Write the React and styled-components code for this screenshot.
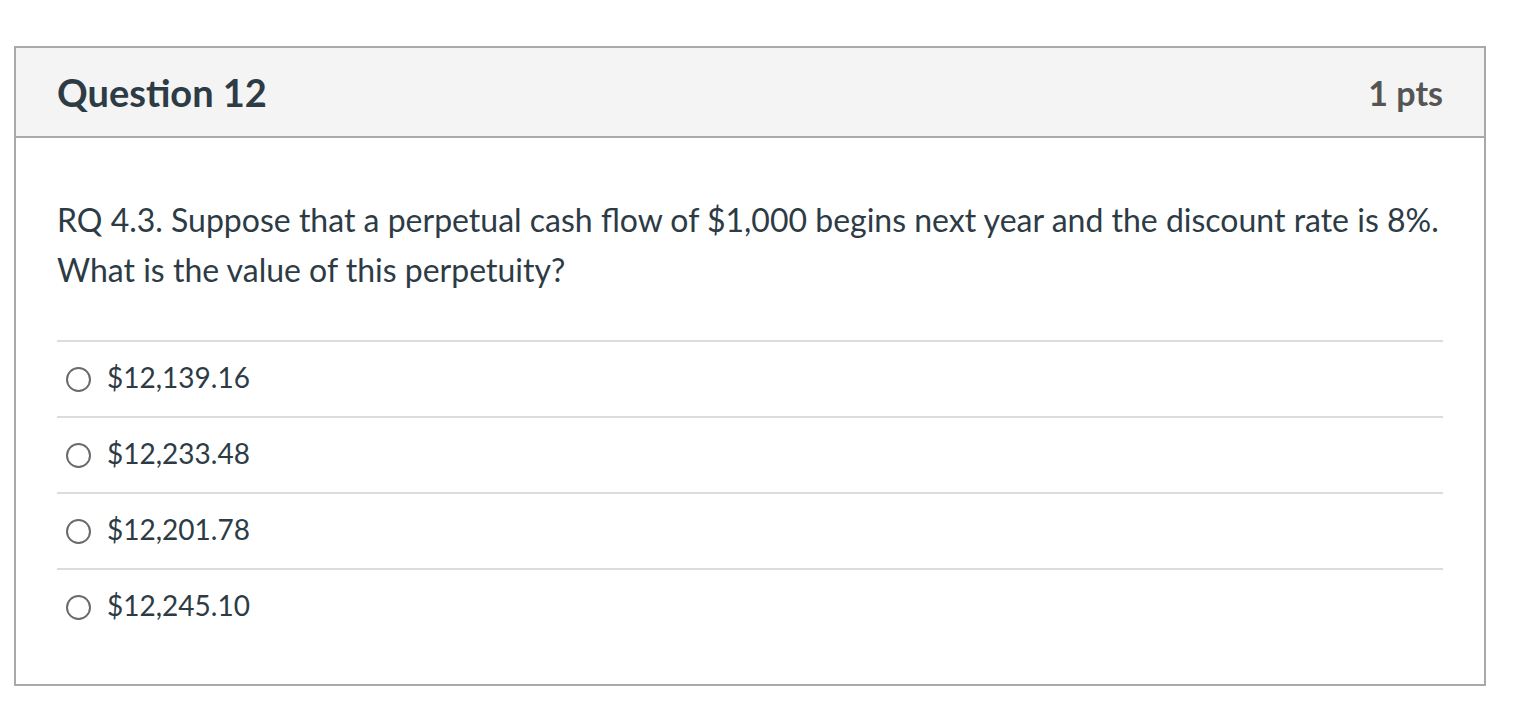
import React from 'react';
import styled, { createGlobalStyle } from 'styled-components';

const GlobalStyle = createGlobalStyle`
  body {
    margin: 0;
    background: #fff;
    font-family: Lato, "Liberation Sans", sans-serif;
    color: #2d3b45;
  }
`;

const answers = ['$12,139.16', '$12,233.48', '$12,201.78', '$12,245.10'];

function App() {
  return (
    <>
      <GlobalStyle />
      <Page>
        <Card>
          <Header>
            <Title>Question 12</Title>
            <Points>1 pts</Points>
          </Header>
          <Body>
            <QuestionText>
              RQ 4.3. Suppose that a perpetual cash flow of $1,000 begins next year and the discount rate is 8%.
              <br />
              What is the value of this perpetuity?
            </QuestionText>
            <AnswerList>
              {answers.map((a) => (
                <Answer key={a}>
                  <Radio />
                  <AnswerLabel>{a}</AnswerLabel>
                </Answer>
              ))}
            </AnswerList>
          </Body>
        </Card>
      </Page>
    </>
  );
}

const Page = styled.div`
  padding: 46px 0 0 14px;
`;

const Card = styled.div`
  width: 1468px;
  border: 2px solid #a9a9a9;
  background: #fff;
`;

const Header = styled.div`
  display: flex;
  align-items: center;
  justify-content: space-between;
  height: 88px;
  padding: 0 41px;
  background: #f4f4f4;
  border-bottom: 2px solid #a9a9a9;
`;

const Title = styled.h2`
  margin: 0;
  font-size: 38px;
  font-weight: 700;
  color: #2d3b45;
`;

const Points = styled.div`
  font-size: 34px;
  font-weight: 700;
  color: #555;
`;

const Body = styled.div`
  padding: 57px 41px 40px;
`;

const QuestionText = styled.div`
  font-size: 32px;
  line-height: 50px;
  margin-bottom: 45px;
`;

const AnswerList = styled.div`
  border-top: 2px solid #dcdcdc;
`;

const Answer = styled.label`
  display: flex;
  align-items: center;
  height: 74px;
  padding-left: 9px;
  & + & {
    border-top: 2px solid #dcdcdc;
  }
`;

const Radio = styled.span`
  width: 25px;
  height: 25px;
  border: 2px solid #6b6b6b;
  border-radius: 50%;
  box-sizing: border-box;
  margin-right: 16px;
`;

const AnswerLabel = styled.span`
  font-size: 28px;
  padding-bottom: 4px;
`;

export default App;
